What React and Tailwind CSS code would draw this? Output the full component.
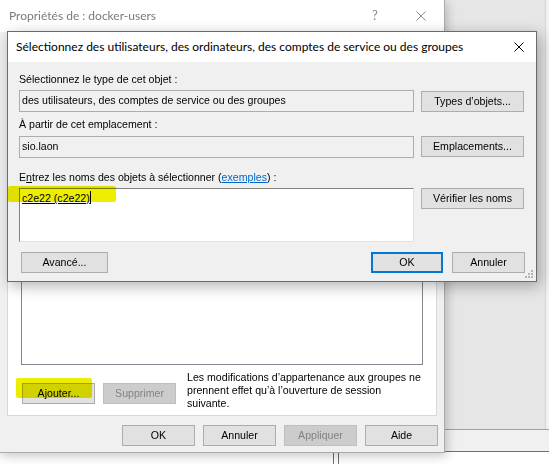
import React from 'react'

const ui = "font-['Liberation_Sans',Arial,sans-serif]"
const seg = "font-['Lato','Noto_Sans',sans-serif]"

function Btn({ children, className = '', disabled = false, primary = false }) {
    const base = disabled
        ? 'bg-[#cccccc] border-[#bfbfbf] text-[#838383]'
        : primary
            ? 'bg-[#e1e1e1] border-[#0078d7] border-2 text-black'
            : 'bg-[#e1e1e1] border-[#adadad] text-black'
    return (
        <div className={`h-[21px] flex items-center justify-center border ${base} ${className}`}>
            {children}
        </div>
    )
}

function CloseX({ color = '#000', size = 10 }) {
    return (
        <svg width={size} height={size} viewBox="0 0 10 10">
            <path d="M0.5 0.5 L9.5 9.5 M9.5 0.5 L0.5 9.5" stroke={color} strokeWidth="1" fill="none" />
        </svg>
    )
}

function Highlight({ className }) {
    return <div className={`absolute bg-[#eded00] mix-blend-multiply rounded-[2px] ${className}`} />
}

function OuterWindow() {
    return (
        <div className="absolute left-[-1px] top-0 w-[446px] h-[453px] bg-[#f0f0f0] border border-t-0 border-[#aaaaaa] shadow-[2px_3px_10px_rgba(0,0,0,0.22)] flex flex-col">
            {/* title bar */}
            <div className="h-[32px] bg-white flex items-center">
                <span className={`${seg} text-[12px] text-[#7a7a7a] pl-[9px] flex-1`}>Propriétés de : docker-users</span>
                <span className={`${seg} w-[46px] text-center text-[13px] text-[#8a8a8a]`}>?</span>
                <span className="w-[46px] flex justify-center"><CloseX color="#8a8a8a" /></span>
            </div>
            {/* tab page */}
            <div className="mt-[28px] ml-[7px] w-[430px] h-[356px] bg-white border border-[#d9d9d9] pl-[13px] pt-[29px]">
                <div className="w-[402px] h-[275px] border border-[#828790] bg-white" />
                <div className="flex items-start mt-[6px]">
                    <div className="relative mt-[12px] ml-[1px]">
                        <Btn className="w-[73px]">Ajouter...</Btn>
                        <Highlight className="left-[-6px] top-[-5px] w-[76px] h-[20px]" />
                    </div>
                    <Btn disabled className="w-[73px] mt-[12px] ml-[8px]">Supprimer</Btn>
                    <div className="ml-[11px] leading-[13px] text-black">
                        Les modifications d’appartenance aux groupes ne<br />
                        prennent effet qu’à l’ouverture de session<br />
                        suivante.
                    </div>
                </div>
            </div>
            {/* bottom buttons */}
            <div className="flex justify-end gap-[8px] pr-[6px] mt-[9px]">
                <Btn className="w-[73px]">OK</Btn>
                <Btn className="w-[73px]">Annuler</Btn>
                <Btn disabled className="w-[73px]">Appliquer</Btn>
                <Btn className="w-[73px]">Aide</Btn>
            </div>
        </div>
    )
}

function PickerDialog() {
    return (
        <div className="absolute left-[7px] top-[31px] w-[530px] h-[251px] border border-[#6b6b6b] bg-[#f0f0f0] shadow-[3px_4px_14px_rgba(0,0,0,0.3)] flex flex-col">
            <div className="h-[30px] bg-white flex items-center">
                <span className={`${seg} text-[12px] text-black pl-[8px] flex-1`}>
                    Sélectionnez des utilisateurs, des ordinateurs, des comptes de service ou des groupes
                </span>
                <span className="w-[30px] mr-[2px] flex justify-center"><CloseX /></span>
            </div>
            <div className="relative flex-1 pl-[11px] pr-[11px] pt-[11px]">
                <div className="leading-[13px]">Sélectionnez le type de cet objet :</div>
                <div className="flex gap-[7px] mt-[4px]">
                    <div className="w-[395px] h-[22px] border border-[#adadad] bg-[#f0f0f0] flex items-center pl-[2px]">
                        des utilisateurs, des comptes de service ou des groupes
                    </div>
                    <Btn className="w-[103px] mt-[1px]">Types d’objets...</Btn>
                </div>

                <div className="leading-[13px] mt-[6px]">À partir de cet emplacement :</div>
                <div className="flex gap-[7px] mt-[5px]">
                    <div className="w-[395px] h-[22px] border border-[#adadad] bg-[#f0f0f0] flex items-center pl-[2px]">
                        sio.laon
                    </div>
                    <Btn className="w-[103px]">Emplacements...</Btn>
                </div>

                <div className="leading-[13px] mt-[13px]">
                    E<u>n</u>trez les noms des objets à sélectionner (<span className="text-[#0066cc] underline">exemples</span>) :
                </div>
                <div className="flex gap-[7px] mt-[4px]">
                    <div className="relative w-[395px] h-[54px] bg-white border-t border-l border-[#828282] border-r-[#e3e3e3] border-b-[#e3e3e3] border-r border-b pl-[2px] pt-[2px]">
                        <span className="underline leading-[13px]">c2e22 (c2e22)</span>
                        <span className="inline-block w-px h-[13px] bg-black align-[-2px]" />
                        <Highlight className="left-[-12px] top-[-3px] w-[108px] h-[16px]" />
                    </div>
                    <Btn className="w-[103px]">Vérifier les noms</Btn>
                </div>

                <div className="flex items-center mt-[10px]">
                    <Btn className="w-[87px] ml-[2px]">Avancé...</Btn>
                    <div className="flex-1" />
                    <Btn primary className="w-[72px]">OK</Btn>
                    <Btn className="w-[73px] ml-[9px]">Annuler</Btn>
                </div>

                {/* size grip */}
                <svg className="absolute right-[2px] bottom-[2px]" width="9" height="9" viewBox="0 0 9 9">
                    <g fill="#b4b4b4">
                        <rect x="6" y="0" width="2" height="2" />
                        <rect x="3" y="3" width="2" height="2" />
                        <rect x="6" y="3" width="2" height="2" />
                        <rect x="0" y="6" width="2" height="2" />
                        <rect x="3" y="6" width="2" height="2" />
                        <rect x="6" y="6" width="2" height="2" />
                    </g>
                </svg>
            </div>
        </div>
    )
}

export default function App() {
    return (
        <div className={`relative w-[549px] h-[464px] overflow-hidden bg-white text-[10.6px] text-black ${ui}`}>
            {/* desktop behind */}
            <div className="absolute left-[440px] top-0 w-[109px] h-[430px] bg-[#e6e6e6] border-b border-[#a0a0a0]">
                <div className="absolute right-0 top-0 w-[4px] h-full bg-[#f2f2f2] border-l border-[#d4d4d4]" />
            </div>
            <div className="absolute left-[440px] top-[430px] w-[109px] h-[22px] bg-[#f0f0f0] border-b border-[#6e6e6e]" />
            <div className="absolute left-[333px] top-[452px] w-[6px] h-[12px] border-l border-r border-[#6e6e6e]" />
            <div className="absolute left-0 top-0 w-[440px] h-px bg-[#9c9c9c]" />

            <OuterWindow />
            <PickerDialog />
        </div>
    )
}
